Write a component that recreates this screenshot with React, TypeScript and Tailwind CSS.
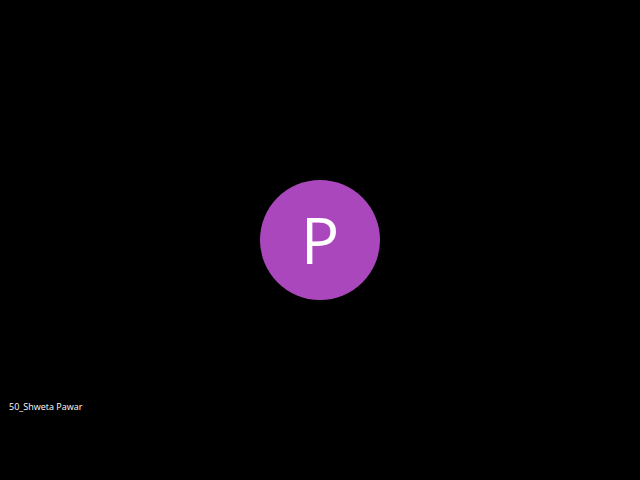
import React from 'react'

const App: React.FC = () => {
  return (
    <div
      className="relative w-[640px] h-[480px] bg-black flex items-center justify-center overflow-hidden"
      style={{ fontFamily: '"Open Sans", sans-serif' }}
    >
      {/* Avatar */}
      <div className="w-[120px] h-[120px] rounded-full bg-[#ab47bc] flex items-center justify-center">
        <span className="text-white text-[64px] leading-none font-normal">P</span>
      </div>

      {/* Participant name */}
      <div className="absolute left-[9px] top-[400px] text-white text-[9px] leading-[13px]">
        50_Shweta Pawar
      </div>
    </div>
  )
}

export default App
